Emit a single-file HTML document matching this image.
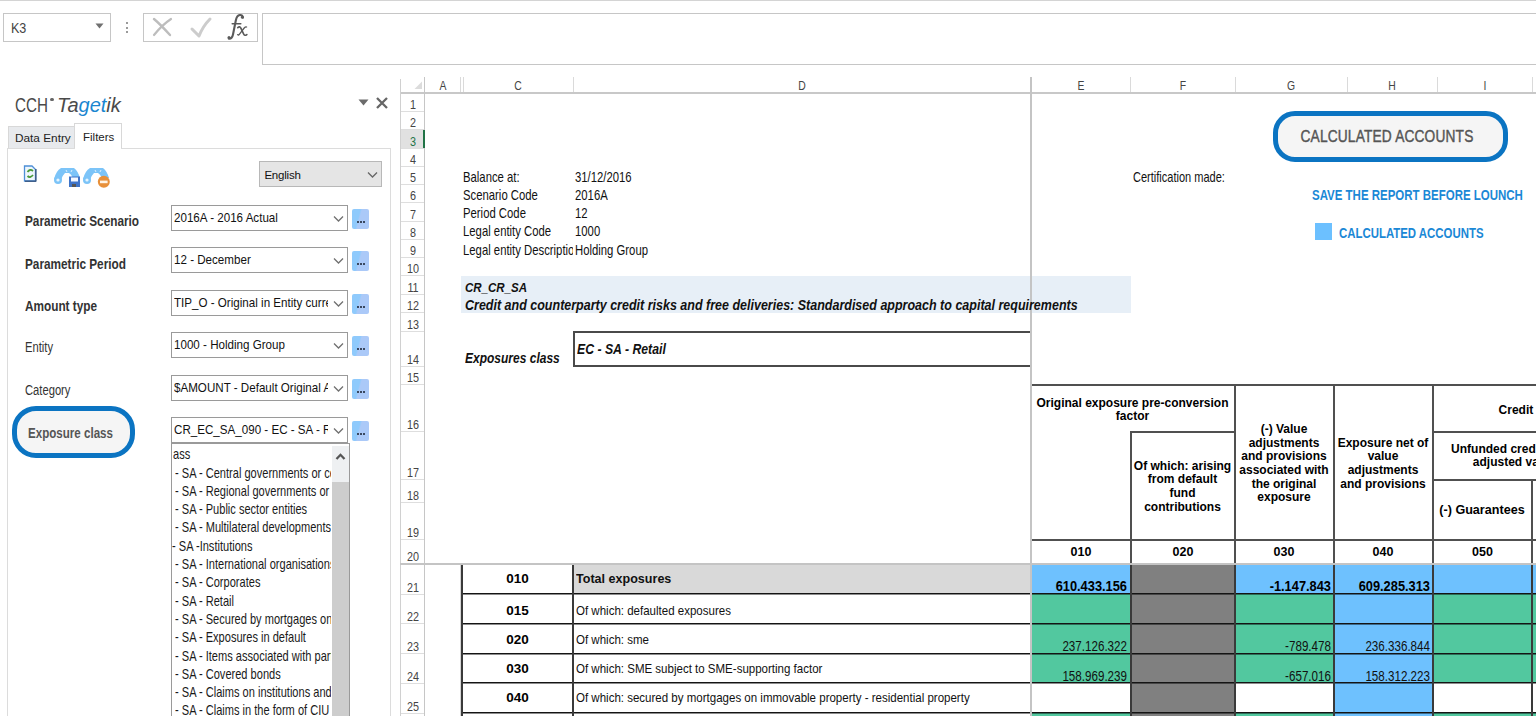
<!DOCTYPE html>
<html><head><meta charset="utf-8"><style>
html,body{margin:0;padding:0;background:#fff;width:1536px;height:716px;overflow:hidden;position:relative;font-family:"Liberation Sans", sans-serif;}
div{box-sizing:border-box;}
</style></head><body>
<div style="position:absolute;left:0px;top:0px;width:1536px;height:1px;background:#d4d4d4"></div><div style="position:absolute;left:3px;top:13px;width:108px;height:29px;border:1px solid #c6c6c6;background:#fff"></div><div style="position:absolute;top:21.04px;font-size:14.6px;line-height:14.6px;font-weight:normal;font-style:normal;color:#444;white-space:nowrap;left:10.5px;transform:scaleX(0.86);transform-origin:0 0;">K3</div><svg style="position:absolute;left:95px;top:23px" width="10" height="7"><path d="M0.5 0.5 L8.5 0.5 L4.5 5.5 Z" fill="#707070"/></svg><div style="position:absolute;left:126px;top:22px;width:2px;height:2px;background:#9a9a9a"></div><div style="position:absolute;left:126px;top:27px;width:2px;height:2px;background:#9a9a9a"></div><div style="position:absolute;left:126px;top:31px;width:2px;height:2px;background:#9a9a9a"></div><div style="position:absolute;left:143px;top:13px;width:115px;height:29px;border:1px solid #c6c6c6;background:#fff"></div><svg style="position:absolute;left:150px;top:16px" width="100" height="26"><path d="M4 3 Q10 8 20 19" stroke="#bdbdbd" stroke-width="2.4" fill="none" stroke-linecap="round"/><path d="M21 3 Q12 9 4 19" stroke="#bdbdbd" stroke-width="2.2" fill="none" stroke-linecap="round"/><path d="M42 13 L49 20 Q53 10 60 3" stroke="#cccccc" stroke-width="3" fill="none" stroke-linecap="round" stroke-linejoin="round"/></svg><svg style="position:absolute;left:0;top:0" width="260" height="45"><g stroke="#5a5a5a" fill="none" stroke-linecap="round"><path d="M243 17.5 Q242.5 14.8 239.8 15 Q236.8 15.4 235.8 20.5 L233 34.5 Q232 39 228.8 38.6" stroke-width="2.1"/><path d="M232.2 23.8 L240.8 23.8" stroke-width="1.5"/><path d="M237.8 27.6 Q239.8 25.8 241 28.4 L243.6 34 Q244.6 36.2 246.8 34.6" stroke-width="1.7"/><path d="M246.6 27 Q245.5 26.6 244.2 28 L239.5 34.2 Q238.6 35.6 237.6 34.6" stroke-width="1.3"/></g><circle cx="242.4" cy="17.3" r="1.5" fill="#5a5a5a"/><circle cx="229" cy="37.4" r="1.5" fill="#5a5a5a"/></svg><div style="position:absolute;left:262px;top:13px;width:1290px;height:52px;border:1px solid #c6c6c6;background:#fff"></div><div style="position:absolute;top:95.37px;font-size:20px;line-height:20px;font-weight:normal;font-style:normal;color:#4a4a4a;white-space:nowrap;left:14.6px;transform:scaleX(0.76);transform-origin:0 0;font-weight:normal;">CCH</div><div style="position:absolute;left:50px;top:97.5px;width:3.5px;height:3.5px;background:#666;border-radius:50%"></div><div style="position:absolute;top:95.37px;font-size:20px;line-height:20px;font-weight:normal;font-style:italic;color:#4a4a4a;white-space:nowrap;left:57px;">Ta<span style="color:#1a86d0">get</span>ik</div><svg style="position:absolute;left:358px;top:99px" width="12" height="8"><path d="M0.5 0.5 L10.5 0.5 L5.5 6.5 Z" fill="#6b6b6b"/></svg><svg style="position:absolute;left:375px;top:96px" width="14" height="14"><path d="M2 2 L12 12 M12 2 L2 12" stroke="#666" stroke-width="2.3"/></svg><div style="position:absolute;left:8px;top:126px;width:67px;height:23px;background:#e8eaed;border:1px solid #d8d8d8;border-bottom:none"></div><div style="position:absolute;top:133.31px;font-size:11.8px;line-height:11.8px;font-weight:normal;font-style:normal;color:#222;white-space:nowrap;left:15px;">Data Entry</div><div style="position:absolute;left:74px;top:123px;width:48px;height:26px;background:#fff;border:1px solid #d8d8d8;border-bottom:none"></div><div style="position:absolute;top:132.07px;font-size:11.5px;line-height:11.5px;font-weight:normal;font-style:normal;color:#222;white-space:nowrap;left:83px;">Filters</div><div style="position:absolute;left:7px;top:148px;width:384px;height:600px;border:1px solid #dcdcdc;border-bottom:none;background:#fff"></div><div style="position:absolute;left:75px;top:147px;width:46px;height:3px;background:#fff"></div><svg style="position:absolute;left:0px;top:0px" width="120" height="200">
<path d="M24.5 166 L32 166 L35.5 169.5 L35.5 181 L24.5 181 Z" fill="#eef6fd" stroke="#4d8fd6" stroke-width="1.3"/>
<path d="M25 181.3 L36 181.3 M35.8 169 L35.8 181.5" stroke="#3f5f8a" stroke-width="1.6"/>
<path d="M27.5 172 Q30 168.5 33 171" stroke="#4a9a3a" stroke-width="1.8" fill="none"/>
<path d="M33 175 Q30 178.5 27.5 176" stroke="#4a9a3a" stroke-width="1.8" fill="none"/>
<g fill="#7cc4f8">
<path d="M54 179 Q56 171 61 168 L74 168 Q78 171 80 178 L73 178 Q71 174 69 173 L65 173 Q62 176 61 180 Z"/>
<circle cx="58" cy="180" r="4"/>
<path d="M83 179 Q85 171 90 168 L103 168 Q107 171 109 178 L102 178 Q100 174 98 173 L94 173 Q91 176 90 180 Z"/>
<circle cx="87" cy="180" r="4"/>
</g>
<circle cx="58" cy="180" r="1.6" fill="#e6f4fe"/>
<circle cx="87" cy="180" r="1.6" fill="#e6f4fe"/>
<path d="M66 170 L67 172 M72 170 L71 172 M95 170 L96 172 M101 170 L100 172" stroke="#e6f4fe" stroke-width="0.9"/>
<rect x="69" y="176.5" width="11" height="10.5" fill="#3f74c8"/>
<rect x="71" y="177.5" width="7" height="4" fill="#f4f8ff"/>
<rect x="72" y="184" width="4" height="3" fill="#555"/>
<circle cx="103.8" cy="181.8" r="6" fill="#e8903a"/>
<rect x="100" y="180.6" width="7.6" height="2.6" fill="#fff3e4"/>
</svg><div style="position:absolute;left:259px;top:161px;width:123px;height:26px;background:#e5e5e5;border:1.5px solid #b8b8b8"></div><div style="position:absolute;top:170.17px;font-size:11.5px;line-height:11.5px;font-weight:normal;font-style:normal;color:#111;white-space:nowrap;left:264.4px;letter-spacing:-0.2px;">English</div><svg style="position:absolute;left:367px;top:170.5px" width="12" height="8"><path d="M1 1.5 L5.5 6 L10 1.5" stroke="#666" stroke-width="1.3" fill="none"/></svg><div style="position:absolute;top:212.55px;font-size:15.3px;line-height:15.3px;font-weight:bold;font-style:normal;color:#333;white-space:nowrap;left:25px;transform:scaleX(0.771);transform-origin:0 0;">Parametric Scenario</div><div style="position:absolute;left:171px;top:205px;width:177px;height:26px;background:#fff;border:1.5px solid #9a9a9a;overflow:hidden"></div><div style="position:absolute;left:174px;top:205px;width:154px;height:26px;overflow:hidden"><div style="position:absolute;left:0;top:5.83px;font-size:13.2px;line-height:13.2px;white-space:nowrap;color:#111;transform:scaleX(0.88);transform-origin:0 0">2016A - 2016 Actual</div></div><svg style="position:absolute;left:333px;top:214.5px" width="12" height="8"><path d="M1 1.5 L5.5 6 L10 1.5" stroke="#707070" stroke-width="1.3" fill="none"/></svg><div style="position:absolute;left:352px;top:209px;width:17px;height:20px;background:linear-gradient(105deg,#8fcafc 0,#8fcafc 38%,#abc9f8 46%,#abc9f8 100%);border-radius:2px"></div><div style="position:absolute;left:357px;top:221px;width:1.8px;height:1.8px;background:#3a4860"></div><div style="position:absolute;left:360px;top:221px;width:1.8px;height:1.8px;background:#3a4860"></div><div style="position:absolute;left:363px;top:221px;width:1.8px;height:1.8px;background:#3a4860"></div><div style="position:absolute;top:255.55px;font-size:15.3px;line-height:15.3px;font-weight:bold;font-style:normal;color:#333;white-space:nowrap;left:25px;transform:scaleX(0.771);transform-origin:0 0;">Parametric Period</div><div style="position:absolute;left:171px;top:247px;width:177px;height:26px;background:#fff;border:1.5px solid #9a9a9a;overflow:hidden"></div><div style="position:absolute;left:174px;top:247px;width:154px;height:26px;overflow:hidden"><div style="position:absolute;left:0;top:6.33px;font-size:13.2px;line-height:13.2px;white-space:nowrap;color:#111;transform:scaleX(0.88);transform-origin:0 0">12 - December</div></div><svg style="position:absolute;left:333px;top:256.5px" width="12" height="8"><path d="M1 1.5 L5.5 6 L10 1.5" stroke="#707070" stroke-width="1.3" fill="none"/></svg><div style="position:absolute;left:352px;top:251px;width:17px;height:20px;background:linear-gradient(105deg,#8fcafc 0,#8fcafc 38%,#abc9f8 46%,#abc9f8 100%);border-radius:2px"></div><div style="position:absolute;left:357px;top:263px;width:1.8px;height:1.8px;background:#3a4860"></div><div style="position:absolute;left:360px;top:263px;width:1.8px;height:1.8px;background:#3a4860"></div><div style="position:absolute;left:363px;top:263px;width:1.8px;height:1.8px;background:#3a4860"></div><div style="position:absolute;top:297.75px;font-size:15.3px;line-height:15.3px;font-weight:bold;font-style:normal;color:#333;white-space:nowrap;left:25px;transform:scaleX(0.771);transform-origin:0 0;">Amount type</div><div style="position:absolute;left:171px;top:290px;width:177px;height:26px;background:#fff;border:1.5px solid #9a9a9a;overflow:hidden"></div><div style="position:absolute;left:174px;top:290px;width:154px;height:26px;overflow:hidden"><div style="position:absolute;left:0;top:5.83px;font-size:13.2px;line-height:13.2px;white-space:nowrap;color:#111;transform:scaleX(0.88);transform-origin:0 0">TIP_O - Original in Entity currе</div></div><svg style="position:absolute;left:333px;top:299.5px" width="12" height="8"><path d="M1 1.5 L5.5 6 L10 1.5" stroke="#707070" stroke-width="1.3" fill="none"/></svg><div style="position:absolute;left:352px;top:294px;width:17px;height:20px;background:linear-gradient(105deg,#8fcafc 0,#8fcafc 38%,#abc9f8 46%,#abc9f8 100%);border-radius:2px"></div><div style="position:absolute;left:357px;top:306px;width:1.8px;height:1.8px;background:#3a4860"></div><div style="position:absolute;left:360px;top:306px;width:1.8px;height:1.8px;background:#3a4860"></div><div style="position:absolute;left:363px;top:306px;width:1.8px;height:1.8px;background:#3a4860"></div><div style="position:absolute;top:340.45px;font-size:14px;line-height:14px;font-weight:normal;font-style:normal;color:#333;white-space:nowrap;left:25px;transform:scaleX(0.8);transform-origin:0 0;">Entity</div><div style="position:absolute;left:171px;top:332px;width:177px;height:26px;background:#fff;border:1.5px solid #9a9a9a;overflow:hidden"></div><div style="position:absolute;left:174px;top:332px;width:154px;height:26px;overflow:hidden"><div style="position:absolute;left:0;top:6.33px;font-size:13.2px;line-height:13.2px;white-space:nowrap;color:#111;transform:scaleX(0.88);transform-origin:0 0">1000 - Holding Group</div></div><svg style="position:absolute;left:333px;top:341.5px" width="12" height="8"><path d="M1 1.5 L5.5 6 L10 1.5" stroke="#707070" stroke-width="1.3" fill="none"/></svg><div style="position:absolute;left:352px;top:336px;width:17px;height:20px;background:linear-gradient(105deg,#8fcafc 0,#8fcafc 38%,#abc9f8 46%,#abc9f8 100%);border-radius:2px"></div><div style="position:absolute;left:357px;top:348px;width:1.8px;height:1.8px;background:#3a4860"></div><div style="position:absolute;left:360px;top:348px;width:1.8px;height:1.8px;background:#3a4860"></div><div style="position:absolute;left:363px;top:348px;width:1.8px;height:1.8px;background:#3a4860"></div><div style="position:absolute;top:383.15px;font-size:14px;line-height:14px;font-weight:normal;font-style:normal;color:#333;white-space:nowrap;left:25px;transform:scaleX(0.8);transform-origin:0 0;">Category</div><div style="position:absolute;left:171px;top:375px;width:177px;height:26px;background:#fff;border:1.5px solid #9a9a9a;overflow:hidden"></div><div style="position:absolute;left:174px;top:375px;width:154px;height:26px;overflow:hidden"><div style="position:absolute;left:0;top:5.83px;font-size:13.2px;line-height:13.2px;white-space:nowrap;color:#111;transform:scaleX(0.88);transform-origin:0 0">$AMOUNT - Default Original A</div></div><svg style="position:absolute;left:333px;top:384.5px" width="12" height="8"><path d="M1 1.5 L5.5 6 L10 1.5" stroke="#707070" stroke-width="1.3" fill="none"/></svg><div style="position:absolute;left:352px;top:379px;width:17px;height:20px;background:linear-gradient(105deg,#8fcafc 0,#8fcafc 38%,#abc9f8 46%,#abc9f8 100%);border-radius:2px"></div><div style="position:absolute;left:357px;top:391px;width:1.8px;height:1.8px;background:#3a4860"></div><div style="position:absolute;left:360px;top:391px;width:1.8px;height:1.8px;background:#3a4860"></div><div style="position:absolute;left:363px;top:391px;width:1.8px;height:1.8px;background:#3a4860"></div><div style="position:absolute;left:12px;top:406px;width:123px;height:52px;border:5px solid #0b74c2;border-radius:24px;background:#f5f5f5"></div><div style="position:absolute;top:424.75px;font-size:15.3px;line-height:15.3px;font-weight:bold;font-style:normal;color:#555;white-space:nowrap;left:28px;transform:scaleX(0.757);transform-origin:0 0;">Exposure class</div><div style="position:absolute;left:171px;top:417px;width:177px;height:26px;background:#fff;border:1.5px solid #9a9a9a"></div><div style="position:absolute;left:174px;top:417px;width:154px;height:26px;overflow:hidden"><div style="position:absolute;left:0;top:6.13px;font-size:13.2px;line-height:13.2px;white-space:nowrap;color:#111;transform:scaleX(0.88);transform-origin:0 0">CR_EC_SA_090 - EC - SA - Retail</div></div><svg style="position:absolute;left:333px;top:426.5px" width="12" height="8"><path d="M1 1.5 L5.5 6 L10 1.5" stroke="#707070" stroke-width="1.3" fill="none"/></svg><div style="position:absolute;left:352px;top:421px;width:17px;height:20px;background:linear-gradient(105deg,#8fcafc 0,#8fcafc 38%,#abc9f8 46%,#abc9f8 100%);border-radius:2px"></div><div style="position:absolute;left:357px;top:433px;width:1.8px;height:1.8px;background:#3a4860"></div><div style="position:absolute;left:360px;top:433px;width:1.8px;height:1.8px;background:#3a4860"></div><div style="position:absolute;left:363px;top:433px;width:1.8px;height:1.8px;background:#3a4860"></div><div style="position:absolute;left:171px;top:443px;width:179px;height:300px;background:#fff;border:1.5px solid #9a9a9a"></div><div style="position:absolute;left:332px;top:446px;width:16.5px;height:300px;background:#eef0f2"></div><div style="position:absolute;left:332px;top:482px;width:16.5px;height:300px;background:#cdcdcd"></div><svg style="position:absolute;left:335px;top:452px" width="12" height="9"><path d="M1.5 7 L5.5 2.8 L9.5 7" stroke="#555" stroke-width="2.3" fill="none"/></svg><div style="position:absolute;left:172px;top:444px;width:159px;height:280px;overflow:hidden"><div style="position:absolute;left:0.6px;top:4.23px;font-size:13.9px;line-height:13.9px;white-space:nowrap;color:#1a1a1a;transform:scaleX(0.796);transform-origin:0 0">ass</div><div style="position:absolute;left:3px;top:22.53px;font-size:13.9px;line-height:13.9px;white-space:nowrap;color:#1a1a1a;transform:scaleX(0.796);transform-origin:0 0">- SA - Central governments or central banks</div><div style="position:absolute;left:3px;top:40.83px;font-size:13.9px;line-height:13.9px;white-space:nowrap;color:#1a1a1a;transform:scaleX(0.796);transform-origin:0 0">- SA - Regional governments or local authorities</div><div style="position:absolute;left:3px;top:59.13px;font-size:13.9px;line-height:13.9px;white-space:nowrap;color:#1a1a1a;transform:scaleX(0.796);transform-origin:0 0">- SA - Public sector entities</div><div style="position:absolute;left:3px;top:77.43px;font-size:13.9px;line-height:13.9px;white-space:nowrap;color:#1a1a1a;transform:scaleX(0.796);transform-origin:0 0">- SA - Multilateral developments banks</div><div style="position:absolute;left:0px;top:95.73px;font-size:13.9px;line-height:13.9px;white-space:nowrap;color:#1a1a1a;transform:scaleX(0.796);transform-origin:0 0">- SA -Institutions</div><div style="position:absolute;left:3px;top:114.03px;font-size:13.9px;line-height:13.9px;white-space:nowrap;color:#1a1a1a;transform:scaleX(0.796);transform-origin:0 0">- SA - International organisations</div><div style="position:absolute;left:3px;top:132.33px;font-size:13.9px;line-height:13.9px;white-space:nowrap;color:#1a1a1a;transform:scaleX(0.796);transform-origin:0 0">- SA - Corporates</div><div style="position:absolute;left:3px;top:150.63px;font-size:13.9px;line-height:13.9px;white-space:nowrap;color:#1a1a1a;transform:scaleX(0.796);transform-origin:0 0">- SA - Retail</div><div style="position:absolute;left:3px;top:168.93px;font-size:13.9px;line-height:13.9px;white-space:nowrap;color:#1a1a1a;transform:scaleX(0.796);transform-origin:0 0">- SA - Secured by mortgages on immovable property</div><div style="position:absolute;left:3px;top:187.23px;font-size:13.9px;line-height:13.9px;white-space:nowrap;color:#1a1a1a;transform:scaleX(0.796);transform-origin:0 0">- SA - Exposures in default</div><div style="position:absolute;left:3px;top:205.53px;font-size:13.9px;line-height:13.9px;white-space:nowrap;color:#1a1a1a;transform:scaleX(0.796);transform-origin:0 0">- SA - Items associated with particular high risk</div><div style="position:absolute;left:3px;top:223.83px;font-size:13.9px;line-height:13.9px;white-space:nowrap;color:#1a1a1a;transform:scaleX(0.796);transform-origin:0 0">- SA - Covered bonds</div><div style="position:absolute;left:3px;top:242.13px;font-size:13.9px;line-height:13.9px;white-space:nowrap;color:#1a1a1a;transform:scaleX(0.796);transform-origin:0 0">- SA - Claims on institutions and corporates</div><div style="position:absolute;left:3px;top:260.43px;font-size:13.9px;line-height:13.9px;white-space:nowrap;color:#1a1a1a;transform:scaleX(0.796);transform-origin:0 0">- SA - Claims in the form of CIU</div></div><div style="position:absolute;left:400px;top:92px;width:1136px;height:1.5px;background:#c8c8c8"></div><div style="position:absolute;left:400px;top:79px;width:1px;height:637px;background:#d0d0d0"></div><div style="position:absolute;left:424px;top:77px;width:1px;height:639px;background:#c6c6c6"></div><svg style="position:absolute;left:413px;top:81px" width="10" height="9"><path d="M9 0.5 L9 8 L1.5 8 Z" fill="#dcdcdc"/></svg><div style="position:absolute;left:459.5px;top:77px;width:1px;height:15px;background:#dadada"></div><div style="position:absolute;left:463px;top:77px;width:1px;height:15px;background:#dadada"></div><div style="position:absolute;left:573px;top:77px;width:1px;height:15px;background:#dadada"></div><div style="position:absolute;left:1130px;top:77px;width:1px;height:15px;background:#dadada"></div><div style="position:absolute;left:1235px;top:77px;width:1px;height:15px;background:#dadada"></div><div style="position:absolute;left:1346.5px;top:77px;width:1px;height:15px;background:#dadada"></div><div style="position:absolute;left:1436.5px;top:77px;width:1px;height:15px;background:#dadada"></div><div style="position:absolute;left:1531.5px;top:77px;width:1px;height:15px;background:#dadada"></div><div style="position:absolute;left:1030px;top:77px;width:2px;height:639px;background:#c4c4c4"></div><div style="position:absolute;top:79.00px;font-size:13px;line-height:13px;font-weight:normal;font-style:normal;color:#444;white-space:nowrap;left:-57px;width:1000px;text-align:center;transform:scaleX(0.8);transform-origin:50% 0;">A</div><div style="position:absolute;top:79.00px;font-size:13px;line-height:13px;font-weight:normal;font-style:normal;color:#444;white-space:nowrap;left:18px;width:1000px;text-align:center;transform:scaleX(0.8);transform-origin:50% 0;">C</div><div style="position:absolute;top:79.00px;font-size:13px;line-height:13px;font-weight:normal;font-style:normal;color:#444;white-space:nowrap;left:302px;width:1000px;text-align:center;transform:scaleX(0.8);transform-origin:50% 0;">D</div><div style="position:absolute;top:79.00px;font-size:13px;line-height:13px;font-weight:normal;font-style:normal;color:#444;white-space:nowrap;left:581px;width:1000px;text-align:center;transform:scaleX(0.8);transform-origin:50% 0;">E</div><div style="position:absolute;top:79.00px;font-size:13px;line-height:13px;font-weight:normal;font-style:normal;color:#444;white-space:nowrap;left:683px;width:1000px;text-align:center;transform:scaleX(0.8);transform-origin:50% 0;">F</div><div style="position:absolute;top:79.00px;font-size:13px;line-height:13px;font-weight:normal;font-style:normal;color:#444;white-space:nowrap;left:791px;width:1000px;text-align:center;transform:scaleX(0.8);transform-origin:50% 0;">G</div><div style="position:absolute;top:79.00px;font-size:13px;line-height:13px;font-weight:normal;font-style:normal;color:#444;white-space:nowrap;left:892px;width:1000px;text-align:center;transform:scaleX(0.8);transform-origin:50% 0;">H</div><div style="position:absolute;top:79.00px;font-size:13px;line-height:13px;font-weight:normal;font-style:normal;color:#444;white-space:nowrap;left:985px;width:1000px;text-align:center;transform:scaleX(0.8);transform-origin:50% 0;">I</div><div style="position:absolute;left:401px;top:130px;width:23px;height:18px;background:#e1e1e1"></div><div style="position:absolute;left:422.5px;top:130px;width:2.5px;height:18px;background:#217346"></div><div style="position:absolute;left:401px;top:111px;width:23px;height:1px;background:#dedede"></div><div style="position:absolute;top:98.07px;font-size:13.5px;line-height:13.5px;font-weight:normal;font-style:normal;color:#444;white-space:nowrap;left:-87.5px;width:1000px;text-align:center;transform:scaleX(0.8);transform-origin:50% 0;">1</div><div style="position:absolute;left:401px;top:129px;width:23px;height:1px;background:#dedede"></div><div style="position:absolute;top:116.17px;font-size:13.5px;line-height:13.5px;font-weight:normal;font-style:normal;color:#444;white-space:nowrap;left:-87.5px;width:1000px;text-align:center;transform:scaleX(0.8);transform-origin:50% 0;">2</div><div style="position:absolute;left:401px;top:148px;width:23px;height:1px;background:#dedede"></div><div style="position:absolute;top:134.67px;font-size:13.5px;line-height:13.5px;font-weight:normal;font-style:normal;color:#217346;white-space:nowrap;left:-87.5px;width:1000px;text-align:center;transform:scaleX(0.8);transform-origin:50% 0;">3</div><div style="position:absolute;left:401px;top:166px;width:23px;height:1px;background:#dedede"></div><div style="position:absolute;top:152.97px;font-size:13.5px;line-height:13.5px;font-weight:normal;font-style:normal;color:#444;white-space:nowrap;left:-87.5px;width:1000px;text-align:center;transform:scaleX(0.8);transform-origin:50% 0;">4</div><div style="position:absolute;left:401px;top:184px;width:23px;height:1px;background:#dedede"></div><div style="position:absolute;top:171.17px;font-size:13.5px;line-height:13.5px;font-weight:normal;font-style:normal;color:#444;white-space:nowrap;left:-87.5px;width:1000px;text-align:center;transform:scaleX(0.8);transform-origin:50% 0;">5</div><div style="position:absolute;left:401px;top:202px;width:23px;height:1px;background:#dedede"></div><div style="position:absolute;top:189.27px;font-size:13.5px;line-height:13.5px;font-weight:normal;font-style:normal;color:#444;white-space:nowrap;left:-87.5px;width:1000px;text-align:center;transform:scaleX(0.8);transform-origin:50% 0;">6</div><div style="position:absolute;left:401px;top:221px;width:23px;height:1px;background:#dedede"></div><div style="position:absolute;top:207.57px;font-size:13.5px;line-height:13.5px;font-weight:normal;font-style:normal;color:#444;white-space:nowrap;left:-87.5px;width:1000px;text-align:center;transform:scaleX(0.8);transform-origin:50% 0;">7</div><div style="position:absolute;left:401px;top:239px;width:23px;height:1px;background:#dedede"></div><div style="position:absolute;top:226.17px;font-size:13.5px;line-height:13.5px;font-weight:normal;font-style:normal;color:#444;white-space:nowrap;left:-87.5px;width:1000px;text-align:center;transform:scaleX(0.8);transform-origin:50% 0;">8</div><div style="position:absolute;left:401px;top:257px;width:23px;height:1px;background:#dedede"></div><div style="position:absolute;top:244.17px;font-size:13.5px;line-height:13.5px;font-weight:normal;font-style:normal;color:#444;white-space:nowrap;left:-87.5px;width:1000px;text-align:center;transform:scaleX(0.8);transform-origin:50% 0;">9</div><div style="position:absolute;left:401px;top:275px;width:23px;height:1px;background:#dedede"></div><div style="position:absolute;top:262.37px;font-size:13.5px;line-height:13.5px;font-weight:normal;font-style:normal;color:#444;white-space:nowrap;left:-87.5px;width:1000px;text-align:center;transform:scaleX(0.8);transform-origin:50% 0;">10</div><div style="position:absolute;left:401px;top:294px;width:23px;height:1px;background:#dedede"></div><div style="position:absolute;top:280.87px;font-size:13.5px;line-height:13.5px;font-weight:normal;font-style:normal;color:#444;white-space:nowrap;left:-87.5px;width:1000px;text-align:center;transform:scaleX(0.8);transform-origin:50% 0;">11</div><div style="position:absolute;left:401px;top:312px;width:23px;height:1px;background:#dedede"></div><div style="position:absolute;top:299.27px;font-size:13.5px;line-height:13.5px;font-weight:normal;font-style:normal;color:#444;white-space:nowrap;left:-87.5px;width:1000px;text-align:center;transform:scaleX(0.8);transform-origin:50% 0;">12</div><div style="position:absolute;left:401px;top:331px;width:23px;height:1px;background:#dedede"></div><div style="position:absolute;top:317.57px;font-size:13.5px;line-height:13.5px;font-weight:normal;font-style:normal;color:#444;white-space:nowrap;left:-87.5px;width:1000px;text-align:center;transform:scaleX(0.8);transform-origin:50% 0;">13</div><div style="position:absolute;left:401px;top:366px;width:23px;height:1px;background:#dedede"></div><div style="position:absolute;top:353.17px;font-size:13.5px;line-height:13.5px;font-weight:normal;font-style:normal;color:#444;white-space:nowrap;left:-87.5px;width:1000px;text-align:center;transform:scaleX(0.8);transform-origin:50% 0;">14</div><div style="position:absolute;left:401px;top:384px;width:23px;height:1px;background:#dedede"></div><div style="position:absolute;top:371.17px;font-size:13.5px;line-height:13.5px;font-weight:normal;font-style:normal;color:#444;white-space:nowrap;left:-87.5px;width:1000px;text-align:center;transform:scaleX(0.8);transform-origin:50% 0;">15</div><div style="position:absolute;left:401px;top:431px;width:23px;height:1px;background:#dedede"></div><div style="position:absolute;top:418.07px;font-size:13.5px;line-height:13.5px;font-weight:normal;font-style:normal;color:#444;white-space:nowrap;left:-87.5px;width:1000px;text-align:center;transform:scaleX(0.8);transform-origin:50% 0;">16</div><div style="position:absolute;left:401px;top:479px;width:23px;height:1px;background:#dedede"></div><div style="position:absolute;top:466.37px;font-size:13.5px;line-height:13.5px;font-weight:normal;font-style:normal;color:#444;white-space:nowrap;left:-87.5px;width:1000px;text-align:center;transform:scaleX(0.8);transform-origin:50% 0;">17</div><div style="position:absolute;left:401px;top:502px;width:23px;height:1px;background:#dedede"></div><div style="position:absolute;top:489.27px;font-size:13.5px;line-height:13.5px;font-weight:normal;font-style:normal;color:#444;white-space:nowrap;left:-87.5px;width:1000px;text-align:center;transform:scaleX(0.8);transform-origin:50% 0;">18</div><div style="position:absolute;left:401px;top:539px;width:23px;height:1px;background:#dedede"></div><div style="position:absolute;top:526.07px;font-size:13.5px;line-height:13.5px;font-weight:normal;font-style:normal;color:#444;white-space:nowrap;left:-87.5px;width:1000px;text-align:center;transform:scaleX(0.8);transform-origin:50% 0;">19</div><div style="position:absolute;left:401px;top:563px;width:23px;height:1px;background:#dedede"></div><div style="position:absolute;top:549.77px;font-size:13.5px;line-height:13.5px;font-weight:normal;font-style:normal;color:#444;white-space:nowrap;left:-87.5px;width:1000px;text-align:center;transform:scaleX(0.8);transform-origin:50% 0;">20</div><div style="position:absolute;left:401px;top:594px;width:23px;height:1px;background:#dedede"></div><div style="position:absolute;top:580.57px;font-size:13.5px;line-height:13.5px;font-weight:normal;font-style:normal;color:#444;white-space:nowrap;left:-87.5px;width:1000px;text-align:center;transform:scaleX(0.8);transform-origin:50% 0;">21</div><div style="position:absolute;left:401px;top:623px;width:23px;height:1px;background:#dedede"></div><div style="position:absolute;top:610.37px;font-size:13.5px;line-height:13.5px;font-weight:normal;font-style:normal;color:#444;white-space:nowrap;left:-87.5px;width:1000px;text-align:center;transform:scaleX(0.8);transform-origin:50% 0;">22</div><div style="position:absolute;left:401px;top:653px;width:23px;height:1px;background:#dedede"></div><div style="position:absolute;top:640.27px;font-size:13.5px;line-height:13.5px;font-weight:normal;font-style:normal;color:#444;white-space:nowrap;left:-87.5px;width:1000px;text-align:center;transform:scaleX(0.8);transform-origin:50% 0;">23</div><div style="position:absolute;left:401px;top:683px;width:23px;height:1px;background:#dedede"></div><div style="position:absolute;top:669.97px;font-size:13.5px;line-height:13.5px;font-weight:normal;font-style:normal;color:#444;white-space:nowrap;left:-87.5px;width:1000px;text-align:center;transform:scaleX(0.8);transform-origin:50% 0;">24</div><div style="position:absolute;left:401px;top:713px;width:23px;height:1px;background:#dedede"></div><div style="position:absolute;top:699.57px;font-size:13.5px;line-height:13.5px;font-weight:normal;font-style:normal;color:#444;white-space:nowrap;left:-87.5px;width:1000px;text-align:center;transform:scaleX(0.8);transform-origin:50% 0;">25</div><div style="position:absolute;left:400px;top:562.5px;width:1136px;height:2px;background:#c4c4c4"></div><div style="position:absolute;top:169.97px;font-size:14.8px;line-height:14.8px;font-weight:normal;font-style:normal;color:#111;white-space:nowrap;left:462.9px;transform:scaleX(0.765);transform-origin:0 0;">Balance at:</div><div style="position:absolute;top:169.97px;font-size:14.8px;line-height:14.8px;font-weight:normal;font-style:normal;color:#111;white-space:nowrap;left:575.4px;transform:scaleX(0.765);transform-origin:0 0;">31/12/2016</div><div style="position:absolute;top:187.87px;font-size:14.8px;line-height:14.8px;font-weight:normal;font-style:normal;color:#111;white-space:nowrap;left:462.9px;transform:scaleX(0.765);transform-origin:0 0;">Scenario Code</div><div style="position:absolute;top:187.87px;font-size:14.8px;line-height:14.8px;font-weight:normal;font-style:normal;color:#111;white-space:nowrap;left:575.4px;transform:scaleX(0.765);transform-origin:0 0;">2016A</div><div style="position:absolute;top:206.47px;font-size:14.8px;line-height:14.8px;font-weight:normal;font-style:normal;color:#111;white-space:nowrap;left:462.9px;transform:scaleX(0.765);transform-origin:0 0;">Period Code</div><div style="position:absolute;top:206.47px;font-size:14.8px;line-height:14.8px;font-weight:normal;font-style:normal;color:#111;white-space:nowrap;left:575.4px;transform:scaleX(0.765);transform-origin:0 0;">12</div><div style="position:absolute;top:224.37px;font-size:14.8px;line-height:14.8px;font-weight:normal;font-style:normal;color:#111;white-space:nowrap;left:462.9px;transform:scaleX(0.765);transform-origin:0 0;">Legal entity Code</div><div style="position:absolute;top:224.37px;font-size:14.8px;line-height:14.8px;font-weight:normal;font-style:normal;color:#111;white-space:nowrap;left:575.4px;transform:scaleX(0.765);transform-origin:0 0;">1000</div><div style="position:absolute;left:463px;top:240px;width:110px;height:18px;overflow:hidden"><div style="position:absolute;left:-0.1px;top:2.97px;font-size:14.8px;line-height:14.8px;white-space:nowrap;color:#111;transform:scaleX(0.765);transform-origin:0 0">Legal entity Description</div></div><div style="position:absolute;top:242.97px;font-size:14.8px;line-height:14.8px;font-weight:normal;font-style:normal;color:#111;white-space:nowrap;left:575.4px;transform:scaleX(0.765);transform-origin:0 0;">Holding Group</div><div style="position:absolute;left:461px;top:276px;width:670px;height:37px;background:#e7eff7"></div><div style="position:absolute;left:1030px;top:276px;width:2px;height:37px;background:#c4c4c4"></div><div style="position:absolute;top:280.84px;font-size:13.3px;line-height:13.3px;font-weight:bold;font-style:italic;color:#111;white-space:nowrap;left:465px;transform:scaleX(0.866);transform-origin:0 0;">CR_CR_SA</div><div style="position:absolute;top:297.93px;font-size:14.5px;line-height:14.5px;font-weight:bold;font-style:italic;color:#111;white-space:nowrap;left:465px;transform:scaleX(0.862);transform-origin:0 0;">Credit and counterparty credit risks and free deliveries: Standardised approach to capital requirements</div><div style="position:absolute;top:352.32px;font-size:13.8px;line-height:13.8px;font-weight:bold;font-style:italic;color:#111;white-space:nowrap;left:465px;transform:scaleX(0.87);transform-origin:0 0;">Exposures class</div><div style="position:absolute;left:572.5px;top:330.5px;width:458.5px;height:36px;border:2px solid #4a4a4a;border-right:none"></div><div style="position:absolute;top:342.06px;font-size:14.1px;line-height:14.1px;font-weight:bold;font-style:italic;color:#111;white-space:nowrap;left:576.8px;transform:scaleX(0.87);transform-origin:0 0;">EC - SA - Retail</div><div style="position:absolute;left:1030px;top:330px;width:2px;height:38px;background:#c4c4c4"></div><div style="position:absolute;top:170.17px;font-size:14.8px;line-height:14.8px;font-weight:normal;font-style:normal;color:#111;white-space:nowrap;left:1132.6px;transform:scaleX(0.745);transform-origin:0 0;">Certification made:</div><div style="position:absolute;left:1273px;top:110.5px;width:234.5px;height:51.5px;border:5px solid #0b74c2;border-radius:22px;background:#f5f5f5"></div><div style="position:absolute;top:128.26px;font-size:17.3px;line-height:17.3px;font-weight:normal;font-style:normal;color:#555;white-space:nowrap;left:887px;width:1000px;text-align:center;transform:scaleX(0.795);transform-origin:50% 0;letter-spacing:0.2px;-webkit-text-stroke:0.45px #555;">CALCULATED ACCOUNTS</div><div style="position:absolute;top:188.15px;font-size:14px;line-height:14px;font-weight:bold;font-style:normal;color:#1b88d6;white-space:nowrap;left:1312px;transform:scaleX(0.82);transform-origin:0 0;">SAVE THE REPORT BEFORE LOUNCH</div><div style="position:absolute;left:1314.5px;top:222.5px;width:17px;height:17px;background:#6cc0ff"></div><div style="position:absolute;top:226.05px;font-size:14px;line-height:14px;font-weight:bold;font-style:normal;color:#1b88d6;white-space:nowrap;left:1339.2px;transform:scaleX(0.815);transform-origin:0 0;">CALCULATED ACCOUNTS</div><div style="position:absolute;left:1031px;top:384px;width:505px;height:2px;background:#505050"></div><div style="position:absolute;left:1130px;top:431px;width:105px;height:2px;background:#505050"></div><div style="position:absolute;left:1433px;top:431px;width:103px;height:2px;background:#505050"></div><div style="position:absolute;left:1433px;top:479px;width:103px;height:2px;background:#505050"></div><div style="position:absolute;left:1031px;top:539px;width:505px;height:2px;background:#505050"></div><div style="position:absolute;left:1130px;top:431px;width:2px;height:132px;background:#505050"></div><div style="position:absolute;left:1234px;top:384px;width:2px;height:179px;background:#505050"></div><div style="position:absolute;left:1333px;top:384px;width:2px;height:179px;background:#505050"></div><div style="position:absolute;left:1432px;top:384px;width:2px;height:179px;background:#505050"></div><div style="position:absolute;left:1531px;top:479px;width:2px;height:84px;background:#505050"></div><div style="position:absolute;left:1030px;top:384px;width:2px;height:179px;background:#c4c4c4"></div><div style="position:absolute;top:396.84px;font-size:12px;line-height:12px;font-weight:bold;font-style:normal;color:#000;white-space:nowrap;left:632.5px;width:1000px;text-align:center;">Original exposure pre-conversion</div><div style="position:absolute;top:410.14px;font-size:12px;line-height:12px;font-weight:bold;font-style:normal;color:#000;white-space:nowrap;left:632.5px;width:1000px;text-align:center;">factor</div><div style="position:absolute;top:459.74px;font-size:12px;line-height:12px;font-weight:bold;font-style:normal;color:#000;white-space:nowrap;left:682.5px;width:1000px;text-align:center;">Of which: arising</div><div style="position:absolute;top:473.34px;font-size:12px;line-height:12px;font-weight:bold;font-style:normal;color:#000;white-space:nowrap;left:682.5px;width:1000px;text-align:center;">from default</div><div style="position:absolute;top:486.94px;font-size:12px;line-height:12px;font-weight:bold;font-style:normal;color:#000;white-space:nowrap;left:682.5px;width:1000px;text-align:center;">fund</div><div style="position:absolute;top:500.54px;font-size:12px;line-height:12px;font-weight:bold;font-style:normal;color:#000;white-space:nowrap;left:682.5px;width:1000px;text-align:center;">contributions</div><div style="position:absolute;top:422.84px;font-size:12px;line-height:12px;font-weight:bold;font-style:normal;color:#000;white-space:nowrap;left:784px;width:1000px;text-align:center;">(-) Value</div><div style="position:absolute;top:436.54px;font-size:12px;line-height:12px;font-weight:bold;font-style:normal;color:#000;white-space:nowrap;left:784px;width:1000px;text-align:center;">adjustments</div><div style="position:absolute;top:450.24px;font-size:12px;line-height:12px;font-weight:bold;font-style:normal;color:#000;white-space:nowrap;left:784px;width:1000px;text-align:center;">and provisions</div><div style="position:absolute;top:463.94px;font-size:12px;line-height:12px;font-weight:bold;font-style:normal;color:#000;white-space:nowrap;left:784px;width:1000px;text-align:center;">associated with</div><div style="position:absolute;top:477.64px;font-size:12px;line-height:12px;font-weight:bold;font-style:normal;color:#000;white-space:nowrap;left:784px;width:1000px;text-align:center;">the original</div><div style="position:absolute;top:491.34px;font-size:12px;line-height:12px;font-weight:bold;font-style:normal;color:#000;white-space:nowrap;left:784px;width:1000px;text-align:center;">exposure</div><div style="position:absolute;top:436.54px;font-size:12px;line-height:12px;font-weight:bold;font-style:normal;color:#000;white-space:nowrap;left:883px;width:1000px;text-align:center;">Exposure net of</div><div style="position:absolute;top:450.24px;font-size:12px;line-height:12px;font-weight:bold;font-style:normal;color:#000;white-space:nowrap;left:883px;width:1000px;text-align:center;">value</div><div style="position:absolute;top:463.94px;font-size:12px;line-height:12px;font-weight:bold;font-style:normal;color:#000;white-space:nowrap;left:883px;width:1000px;text-align:center;">adjustments</div><div style="position:absolute;top:477.64px;font-size:12px;line-height:12px;font-weight:bold;font-style:normal;color:#000;white-space:nowrap;left:883px;width:1000px;text-align:center;">and provisions</div><div style="position:absolute;top:403.64px;font-size:12px;line-height:12px;font-weight:bold;font-style:normal;color:#000;white-space:nowrap;left:1498.6px;">Credit</div><div style="position:absolute;top:443.44px;font-size:12px;line-height:12px;font-weight:bold;font-style:normal;color:#000;white-space:nowrap;left:1451.1px;">Unfunded cred</div><div style="position:absolute;top:455.94px;font-size:12px;line-height:12px;font-weight:bold;font-style:normal;color:#000;white-space:nowrap;left:1472.8px;">adjusted va</div><div style="position:absolute;top:503.83px;font-size:12.6px;line-height:12.6px;font-weight:bold;font-style:normal;color:#000;white-space:nowrap;left:1439.3px;">(-) Guarantees</div><div style="position:absolute;top:545.92px;font-size:12.5px;line-height:12.5px;font-weight:bold;font-style:normal;color:#000;white-space:nowrap;left:581px;width:1000px;text-align:center;">010</div><div style="position:absolute;top:545.92px;font-size:12.5px;line-height:12.5px;font-weight:bold;font-style:normal;color:#000;white-space:nowrap;left:683px;width:1000px;text-align:center;">020</div><div style="position:absolute;top:545.92px;font-size:12.5px;line-height:12.5px;font-weight:bold;font-style:normal;color:#000;white-space:nowrap;left:784px;width:1000px;text-align:center;">030</div><div style="position:absolute;top:545.92px;font-size:12.5px;line-height:12.5px;font-weight:bold;font-style:normal;color:#000;white-space:nowrap;left:883px;width:1000px;text-align:center;">040</div><div style="position:absolute;top:545.92px;font-size:12.5px;line-height:12.5px;font-weight:bold;font-style:normal;color:#000;white-space:nowrap;left:982.5px;width:1000px;text-align:center;">050</div><div style="position:absolute;left:1031px;top:564px;width:99px;height:30px;background:#6ec1fe"></div><div style="position:absolute;left:1130px;top:564px;width:104px;height:30px;background:#808080"></div><div style="position:absolute;left:1234px;top:564px;width:99px;height:30px;background:#6ec1fe"></div><div style="position:absolute;left:1333px;top:564px;width:99px;height:30px;background:#6ec1fe"></div><div style="position:absolute;left:1432px;top:564px;width:99px;height:30px;background:#6ec1fe"></div><div style="position:absolute;left:1531px;top:564px;width:109px;height:30px;background:#6ec1fe"></div><div style="position:absolute;left:1031px;top:594px;width:99px;height:30px;background:#52c89f"></div><div style="position:absolute;left:1130px;top:594px;width:104px;height:30px;background:#808080"></div><div style="position:absolute;left:1234px;top:594px;width:99px;height:30px;background:#52c89f"></div><div style="position:absolute;left:1333px;top:594px;width:99px;height:30px;background:#6ec1fe"></div><div style="position:absolute;left:1432px;top:594px;width:99px;height:30px;background:#52c89f"></div><div style="position:absolute;left:1531px;top:594px;width:109px;height:30px;background:#52c89f"></div><div style="position:absolute;left:1031px;top:624px;width:99px;height:30px;background:#52c89f"></div><div style="position:absolute;left:1130px;top:624px;width:104px;height:30px;background:#808080"></div><div style="position:absolute;left:1234px;top:624px;width:99px;height:30px;background:#52c89f"></div><div style="position:absolute;left:1333px;top:624px;width:99px;height:30px;background:#6ec1fe"></div><div style="position:absolute;left:1432px;top:624px;width:99px;height:30px;background:#52c89f"></div><div style="position:absolute;left:1531px;top:624px;width:109px;height:30px;background:#52c89f"></div><div style="position:absolute;left:1031px;top:654px;width:99px;height:29px;background:#52c89f"></div><div style="position:absolute;left:1130px;top:654px;width:104px;height:29px;background:#808080"></div><div style="position:absolute;left:1234px;top:654px;width:99px;height:29px;background:#52c89f"></div><div style="position:absolute;left:1333px;top:654px;width:99px;height:29px;background:#6ec1fe"></div><div style="position:absolute;left:1432px;top:654px;width:99px;height:29px;background:#52c89f"></div><div style="position:absolute;left:1531px;top:654px;width:109px;height:29px;background:#52c89f"></div><div style="position:absolute;left:1031px;top:683px;width:99px;height:30px;background:#ffffff"></div><div style="position:absolute;left:1130px;top:683px;width:104px;height:30px;background:#808080"></div><div style="position:absolute;left:1234px;top:683px;width:99px;height:30px;background:#ffffff"></div><div style="position:absolute;left:1333px;top:683px;width:99px;height:30px;background:#6ec1fe"></div><div style="position:absolute;left:1432px;top:683px;width:99px;height:30px;background:#ffffff"></div><div style="position:absolute;left:1531px;top:683px;width:109px;height:30px;background:#ffffff"></div><div style="position:absolute;left:1031px;top:713px;width:99px;height:32px;background:#52c89f"></div><div style="position:absolute;left:1130px;top:713px;width:104px;height:32px;background:#808080"></div><div style="position:absolute;left:1234px;top:713px;width:99px;height:32px;background:#52c89f"></div><div style="position:absolute;left:1333px;top:713px;width:99px;height:32px;background:#6ec1fe"></div><div style="position:absolute;left:1432px;top:713px;width:99px;height:32px;background:#52c89f"></div><div style="position:absolute;left:1531px;top:713px;width:109px;height:32px;background:#52c89f"></div><div style="position:absolute;left:573px;top:564px;width:458px;height:30px;background:#d9d9d9"></div><div style="position:absolute;left:462px;top:593px;width:1074px;height:1px;background:#141414"></div><div style="position:absolute;left:462px;top:594px;width:1074px;height:1px;background:rgba(0,0,0,0.45)"></div><div style="position:absolute;left:462px;top:623px;width:1074px;height:1px;background:#141414"></div><div style="position:absolute;left:462px;top:624px;width:1074px;height:1px;background:rgba(0,0,0,0.45)"></div><div style="position:absolute;left:462px;top:653px;width:1074px;height:1px;background:#141414"></div><div style="position:absolute;left:462px;top:654px;width:1074px;height:1px;background:rgba(0,0,0,0.45)"></div><div style="position:absolute;left:462px;top:682px;width:1074px;height:1px;background:#141414"></div><div style="position:absolute;left:462px;top:683px;width:1074px;height:1px;background:rgba(0,0,0,0.45)"></div><div style="position:absolute;left:462px;top:712px;width:1074px;height:1px;background:#141414"></div><div style="position:absolute;left:462px;top:713px;width:1074px;height:1px;background:rgba(0,0,0,0.45)"></div><div style="position:absolute;left:461px;top:563px;width:2px;height:153px;background:#3a3a3a"></div><div style="position:absolute;left:572px;top:563px;width:2px;height:153px;background:#3a3a3a"></div><div style="position:absolute;left:459.5px;top:563px;width:1px;height:153px;background:#d6d6d6"></div><div style="position:absolute;left:1130px;top:563px;width:2px;height:153px;background:#3a3a3a"></div><div style="position:absolute;left:1234px;top:563px;width:2px;height:153px;background:#3a3a3a"></div><div style="position:absolute;left:1333px;top:563px;width:2px;height:153px;background:#3a3a3a"></div><div style="position:absolute;left:1432px;top:563px;width:2px;height:153px;background:#3a3a3a"></div><div style="position:absolute;left:1531px;top:563px;width:2px;height:153px;background:#3a3a3a"></div><div style="position:absolute;left:1030px;top:563px;width:2px;height:153px;background:#c4c4c4"></div><div style="position:absolute;left:400px;top:562.5px;width:1136px;height:2px;background:#c4c4c4"></div><div style="position:absolute;top:572.37px;font-size:13.5px;line-height:13.5px;font-weight:bold;font-style:normal;color:#000;white-space:nowrap;left:17.5px;width:1000px;text-align:center;">010</div><div style="position:absolute;top:572.37px;font-size:13.5px;line-height:13.5px;font-weight:bold;font-style:normal;color:#111;white-space:nowrap;left:576.3px;transform:scaleX(0.93);transform-origin:0 0;">Total exposures</div><div style="position:absolute;top:603.67px;font-size:13.5px;line-height:13.5px;font-weight:bold;font-style:normal;color:#000;white-space:nowrap;left:17.5px;width:1000px;text-align:center;">015</div><div style="position:absolute;top:603.76px;font-size:13.4px;line-height:13.4px;font-weight:normal;font-style:normal;color:#111;white-space:nowrap;left:576.3px;transform:scaleX(0.86);transform-origin:0 0;">Of which: defaulted exposures</div><div style="position:absolute;top:632.77px;font-size:13.5px;line-height:13.5px;font-weight:bold;font-style:normal;color:#000;white-space:nowrap;left:17.5px;width:1000px;text-align:center;">020</div><div style="position:absolute;top:632.86px;font-size:13.4px;line-height:13.4px;font-weight:normal;font-style:normal;color:#111;white-space:nowrap;left:576.3px;transform:scaleX(0.86);transform-origin:0 0;">Of which: sme</div><div style="position:absolute;top:662.07px;font-size:13.5px;line-height:13.5px;font-weight:bold;font-style:normal;color:#000;white-space:nowrap;left:17.5px;width:1000px;text-align:center;">030</div><div style="position:absolute;top:662.16px;font-size:13.4px;line-height:13.4px;font-weight:normal;font-style:normal;color:#111;white-space:nowrap;left:576.3px;transform:scaleX(0.86);transform-origin:0 0;">Of which: SME subject to SME-supporting factor</div><div style="position:absolute;top:691.17px;font-size:13.5px;line-height:13.5px;font-weight:bold;font-style:normal;color:#000;white-space:nowrap;left:17.5px;width:1000px;text-align:center;">040</div><div style="position:absolute;top:691.26px;font-size:13.4px;line-height:13.4px;font-weight:normal;font-style:normal;color:#111;white-space:nowrap;left:576.3px;transform:scaleX(0.86);transform-origin:0 0;">Of which: secured by mortgages on immovable property - residential property</div><div style="position:absolute;top:580.12px;font-size:13.8px;line-height:13.8px;font-weight:bold;font-style:normal;color:#000;white-space:nowrap;left:127px;width:1000px;text-align:right;transform:scaleX(0.93);transform-origin:100% 0;">610.433.156</div><div style="position:absolute;top:580.12px;font-size:13.8px;line-height:13.8px;font-weight:bold;font-style:normal;color:#000;white-space:nowrap;left:330.5999999999999px;width:1000px;text-align:right;transform:scaleX(0.93);transform-origin:100% 0;">-1.147.843</div><div style="position:absolute;top:580.12px;font-size:13.8px;line-height:13.8px;font-weight:bold;font-style:normal;color:#000;white-space:nowrap;left:429.79999999999995px;width:1000px;text-align:right;transform:scaleX(0.93);transform-origin:100% 0;">609.285.313</div><div style="position:absolute;top:639.35px;font-size:14px;line-height:14px;font-weight:normal;font-style:normal;color:#111;white-space:nowrap;left:127px;width:1000px;text-align:right;transform:scaleX(0.83);transform-origin:100% 0;">237.126.322</div><div style="position:absolute;top:639.35px;font-size:14px;line-height:14px;font-weight:normal;font-style:normal;color:#111;white-space:nowrap;left:330.5999999999999px;width:1000px;text-align:right;transform:scaleX(0.83);transform-origin:100% 0;">-789.478</div><div style="position:absolute;top:639.35px;font-size:14px;line-height:14px;font-weight:normal;font-style:normal;color:#111;white-space:nowrap;left:429.79999999999995px;width:1000px;text-align:right;transform:scaleX(0.83);transform-origin:100% 0;">236.336.844</div><div style="position:absolute;top:669.25px;font-size:14px;line-height:14px;font-weight:normal;font-style:normal;color:#111;white-space:nowrap;left:127px;width:1000px;text-align:right;transform:scaleX(0.83);transform-origin:100% 0;">158.969.239</div><div style="position:absolute;top:669.25px;font-size:14px;line-height:14px;font-weight:normal;font-style:normal;color:#111;white-space:nowrap;left:330.5999999999999px;width:1000px;text-align:right;transform:scaleX(0.83);transform-origin:100% 0;">-657.016</div><div style="position:absolute;top:669.25px;font-size:14px;line-height:14px;font-weight:normal;font-style:normal;color:#111;white-space:nowrap;left:429.79999999999995px;width:1000px;text-align:right;transform:scaleX(0.83);transform-origin:100% 0;">158.312.223</div>
</body></html>
